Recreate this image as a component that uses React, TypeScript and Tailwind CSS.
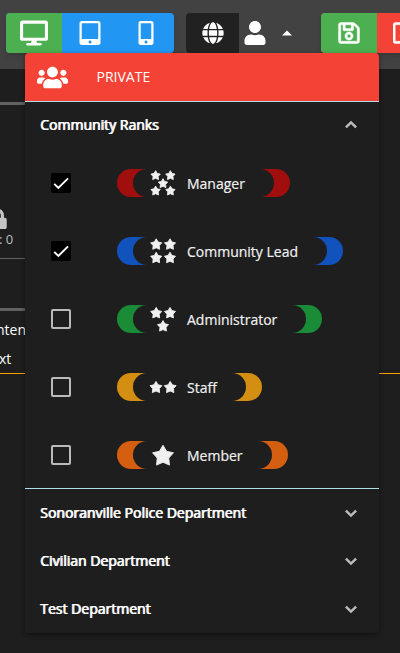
import React from "react";
import { FaDesktop, FaTabletAlt, FaMobileAlt, FaGlobe, FaUser, FaRegSave, FaRegWindowClose, FaUsers, FaLock } from "react-icons/fa";

type Rank = { name: string; color: string; stars: number[][]; size: number; width: string; on: boolean };

const RANKS: Rank[] = [
  { name: "Manager", color: "bg-[#a00f0d]", stars: [[6.6, 6.6], [21.4, 6.6], [14, 14.6], [6.6, 22], [21.4, 22]], size: 4.9, width: "w-[173px]", on: true },
  { name: "Community Lead", color: "bg-[#1152bd]", stars: [[7.2, 7.6], [21, 7.6], [7.2, 21], [21, 21]], size: 5.8, width: "w-[226px]", on: true },
  { name: "Administrator", color: "bg-[#1a8b37]", stars: [[7.2, 8.2], [21, 8.2], [14, 21.4]], size: 5.8, width: "w-[205px]", on: false },
  { name: "Staff", color: "bg-[#d48e12]", stars: [[7, 14.6], [21.2, 14.6]], size: 6.2, width: "w-[145px]", on: false },
  { name: "Member", color: "bg-[#d45f11]", stars: [[14, 15.2]], size: 11, width: "w-[171px]", on: false },
];

function starPoints([cx, cy]: number[], r: number) {
  return Array.from({ length: 10 }, (_, i) => {
    const d = i % 2 ? r * 0.55 : r;
    const a = (Math.PI / 5) * i - Math.PI / 2;
    return `${(cx + d * Math.cos(a)).toFixed(2)},${(cy + d * Math.sin(a)).toFixed(2)}`;
  }).join(" ");
}

function Chevron({ up = false }: { up?: boolean }) {
  return (
    <svg width="24" height="24" viewBox="0 0 24 24" fill="none" stroke="#bbbbbb" strokeWidth="2.5" className={up ? "rotate-180" : ""}>
      <path d="m6.9 9.6 5.1 5 5.1-5" />
    </svg>
  );
}

function Section({ title, up }: { title: string; up?: boolean }) {
  return (
    <div className={`flex items-center justify-between pl-[15px] pr-4 ${up ? "h-[47px] pb-px" : "h-12"}`}>
      <span className="text-sm [-webkit-text-stroke:0.2px_white] [text-shadow:0.8px_0_0_white]">{title}</span>
      <Chevron up={up} />
    </div>
  );
}

function RankRow({ rank }: { rank: Rank }) {
  return (
    <div className="flex h-[68px] items-center pl-[26px]">
      {rank.on ? (
        <span className="flex size-5 items-center justify-center rounded-[2px] bg-black">
          <svg width="20" height="20" viewBox="0 0 20 20" fill="none" stroke="white" strokeWidth="1.9">
            <path d="M3.2 10.8 7.4 15 17 5.4" />
          </svg>
        </span>
      ) : (
        <span className="size-5 rounded-[2px] border-2 border-[#bbbbbb]" />
      )}
      <div className={`ml-[46px] flex h-7 overflow-hidden rounded-full ${rank.color} ${rank.width}`}>
        <div className="mx-4 flex flex-1 items-center rounded-full bg-[#1e1e1e] pl-4">
          <svg width="28" height="28" viewBox="0 0 28 28" fill="#f0f0f0" className="shrink-0">
            {rank.stars.map((s, i) => (
              <polygon key={i} points={starPoints(s, rank.size)} stroke="#f0f0f0" strokeWidth="0.9" strokeLinejoin="round" />
            ))}
          </svg>
          <span className="ml-[10px] whitespace-nowrap pt-[2px] text-sm text-[#f0f0f0] [-webkit-text-stroke:0.2px_#f0f0f0]">{rank.name}</span>
        </div>
      </div>
    </div>
  );
}

export default function App() {
  return (
    <div className="relative h-[653px] w-[400px] overflow-hidden bg-[#1e1e1e] text-white [font-family:'Open_Sans','Noto_Sans',sans-serif]">
      <header className="flex h-[69px] items-start bg-[#424242] pl-1.5 pt-[13px] text-2xl">
        <div className="flex h-10 w-[168px] shrink-0 overflow-hidden rounded-[4px] bg-[#2196f3] shadow-md">
          <span className="flex w-14 items-center justify-center bg-[#4caf50]"><FaDesktop className="size-[28px]" /></span>
          <span className="flex w-14 items-center justify-center"><FaTabletAlt /></span>
          <span className="flex w-14 items-center justify-center"><FaMobileAlt /></span>
        </div>
        <div className="ml-3 flex h-10 w-[53px] shrink-0 items-center justify-center rounded-l-[4px] bg-[#212121]"><FaGlobe className="size-[22px]" /></div>
        <div className="flex h-10 w-[82px] shrink-0 items-center pl-1">
          <FaUser />
          <svg width="24" height="24" viewBox="0 0 24 24" fill="white" className="ml-2"><path d="m7 14.5 5-5 5 5z" /></svg>
        </div>
        <div className="flex h-10 w-[120px] shrink-0 overflow-hidden rounded-[4px] bg-[#f44336] shadow-md">
          <span className="flex w-14 items-center justify-center bg-[#4caf50]"><FaRegSave stroke="white" strokeWidth="10" /></span>
          <span className="flex w-14 items-center justify-center"><FaRegWindowClose stroke="white" strokeWidth="10" /></span>
        </div>
      </header>

      <main className="flex flex-col text-sm">
        <div className="mt-[33px] h-[3px] w-[200px] bg-[#616161]" />
        <div className="flex h-[154px] w-[200px] flex-col border-b border-[#616161] pt-[104px]">
          <FaLock className="-ml-[12px] text-[20px] text-[#c4c4c4]" />
          <span className="-ml-[1px] text-[13px] leading-5 text-[#bdbdbd]">: 0</span>
        </div>
        <div className="mt-[49px] h-[3px] w-[200px] bg-[#616161]" />
        <div className="h-[62px] pt-[9px]">
          <span className="-ml-[4px] block leading-5">ntent</span>
          <span className="-ml-[1px] mt-[9px] block leading-5">xt</span>
        </div>
        <div className="h-px bg-[#ffa000]" />
      </main>

      <section className="absolute left-[25px] top-[53px] w-[354px] overflow-hidden rounded-[4px] bg-[#1e1e1e] shadow-[0_2px_5px_rgba(0,0,0,0.45)]">
        <div className="flex h-[49px] items-center border-b border-[#b0e0e6] bg-[#f44336] pl-3 text-sm">
          <FaUsers className="size-[31px]" />
          <span className="ml-[28.5px]">PRIVATE</span>
        </div>
        <Section title="Community Ranks" up />
        <div className="h-[340px] border-b border-[#b0e0e6]">
          {RANKS.map((rank) => <RankRow key={rank.name} rank={rank} />)}
        </div>
        <Section title="Sonoranville Police Department" />
        <Section title="Civilian Department" />
        <Section title="Test Department" />
      </section>
    </div>
  );
}
